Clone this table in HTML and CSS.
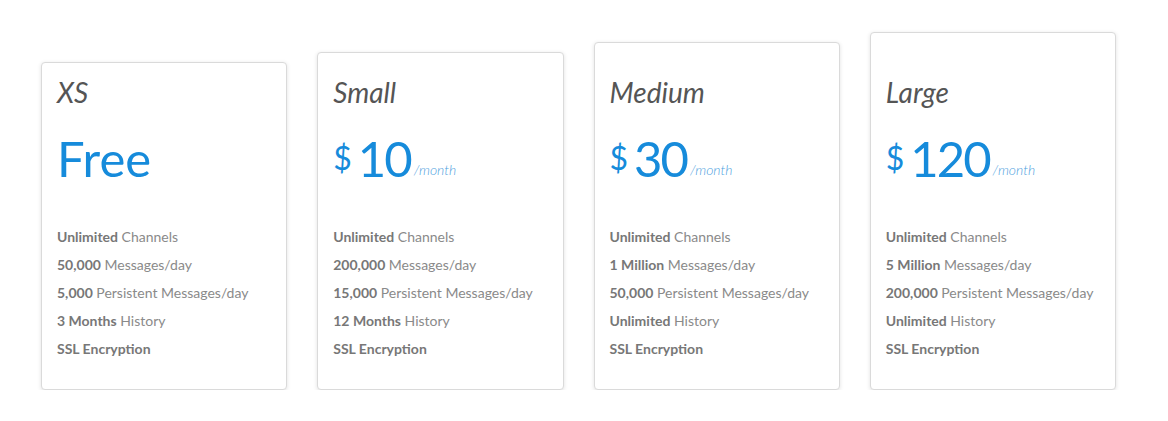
FILE: index.html
```html
<!DOCTYPE html>
<html lang="en">
<head>
<meta charset="utf-8">
<title>Plans</title>
<link rel="stylesheet" href="styles.css">
</head>
<body>
<div class="plans">
  <div class="plan plan--xs">
    <h2 class="plan__name">XS</h2>
    <div class="plan__price"><span class="plan__amount">Free</span></div>
    <ul class="plan__features">
      <li><b>Unlimited</b> Channels</li>
      <li><b>50,000</b> Messages/day</li>
      <li><b>5,000</b> Persistent Messages/day</li>
      <li><b>3 Months</b> History</li>
      <li><b>SSL Encryption</b></li>
    </ul>
  </div>
  <div class="plan plan--s">
    <h2 class="plan__name">Small</h2>
    <div class="plan__price"><span class="plan__currency">$</span><span class="plan__amount plan__amount--num">10</span><span class="plan__period">/month</span></div>
    <ul class="plan__features">
      <li><b>Unlimited</b> Channels</li>
      <li><b>200,000</b> Messages/day</li>
      <li><b>15,000</b> Persistent Messages/day</li>
      <li><b>12 Months</b> History</li>
      <li><b>SSL Encryption</b></li>
    </ul>
  </div>
  <div class="plan plan--m">
    <h2 class="plan__name">Medium</h2>
    <div class="plan__price"><span class="plan__currency">$</span><span class="plan__amount plan__amount--num">30</span><span class="plan__period">/month</span></div>
    <ul class="plan__features">
      <li><b>Unlimited</b> Channels</li>
      <li><b>1 Million</b> Messages/day</li>
      <li><b>50,000</b> Persistent Messages/day</li>
      <li><b>Unlimited</b> History</li>
      <li><b>SSL Encryption</b></li>
    </ul>
  </div>
  <div class="plan plan--l">
    <h2 class="plan__name">Large</h2>
    <div class="plan__price"><span class="plan__currency">$</span><span class="plan__amount plan__amount--num">120</span><span class="plan__period">/month</span></div>
    <ul class="plan__features">
      <li><b>Unlimited</b> Channels</li>
      <li><b>5 Million</b> Messages/day</li>
      <li><b>200,000</b> Persistent Messages/day</li>
      <li><b>Unlimited</b> History</li>
      <li><b>SSL Encryption</b></li>
    </ul>
  </div>
</div>
</body>
</html>
```

FILE: styles.css
```css
* { box-sizing: border-box; }
html, body {
  margin: 0;
  background: #fff;
  font-family: Lato, "Open Sans", "Liberation Sans", sans-serif;
}
.plans {
  display: flex;
  align-items: flex-end;
  gap: 30px;
  padding: 32px 0 0 41px;
  height: 390px;
}
.plan {
  width: 246.25px;
  flex: 0 0 246.25px;
  background: #fff;
  border: 1px solid #dadada;
  border-radius: 4px;
  box-shadow: 0 1px 4px rgba(0, 0, 0, 0.12);
  padding: 12px 15px 26px;
}
.plan--s { padding-top: 22px; }
.plan--m { padding-top: 32px; }
.plan--l { padding-top: 42px; }
.plan__name {
  margin: 0;
  font-size: 28px;
  line-height: 34px;
  font-style: italic;
  font-weight: 400;
  color: #555;
}
.plan__price {
  margin-top: 19px;
  height: 60px;
  display: flex;
  align-items: baseline;
  color: #168bdb;
  white-space: nowrap;
}
.plan__amount {
  font-size: 49px;
  line-height: 60px;
}
.plan__amount--num {
  letter-spacing: -2px;
}
.plan__currency {
  font-size: 32px;
  line-height: 60px;
  margin-right: 6px;
  position: relative;
  top: -7px;
}
.plan__period {
  font-size: 14px;
  font-style: italic;
  font-weight: 300;
  color: #4fa2e0;
  margin-left: 3px;
  position: relative;
  top: -2px;
}
.plan__features {
  list-style: none;
  margin: 35px 0 0;
  padding: 0;
  font-size: 14px;
  line-height: 28px;
  color: #8a8a8a;
}
.plan__features b {
  font-weight: 700;
  color: #777;
}
```
